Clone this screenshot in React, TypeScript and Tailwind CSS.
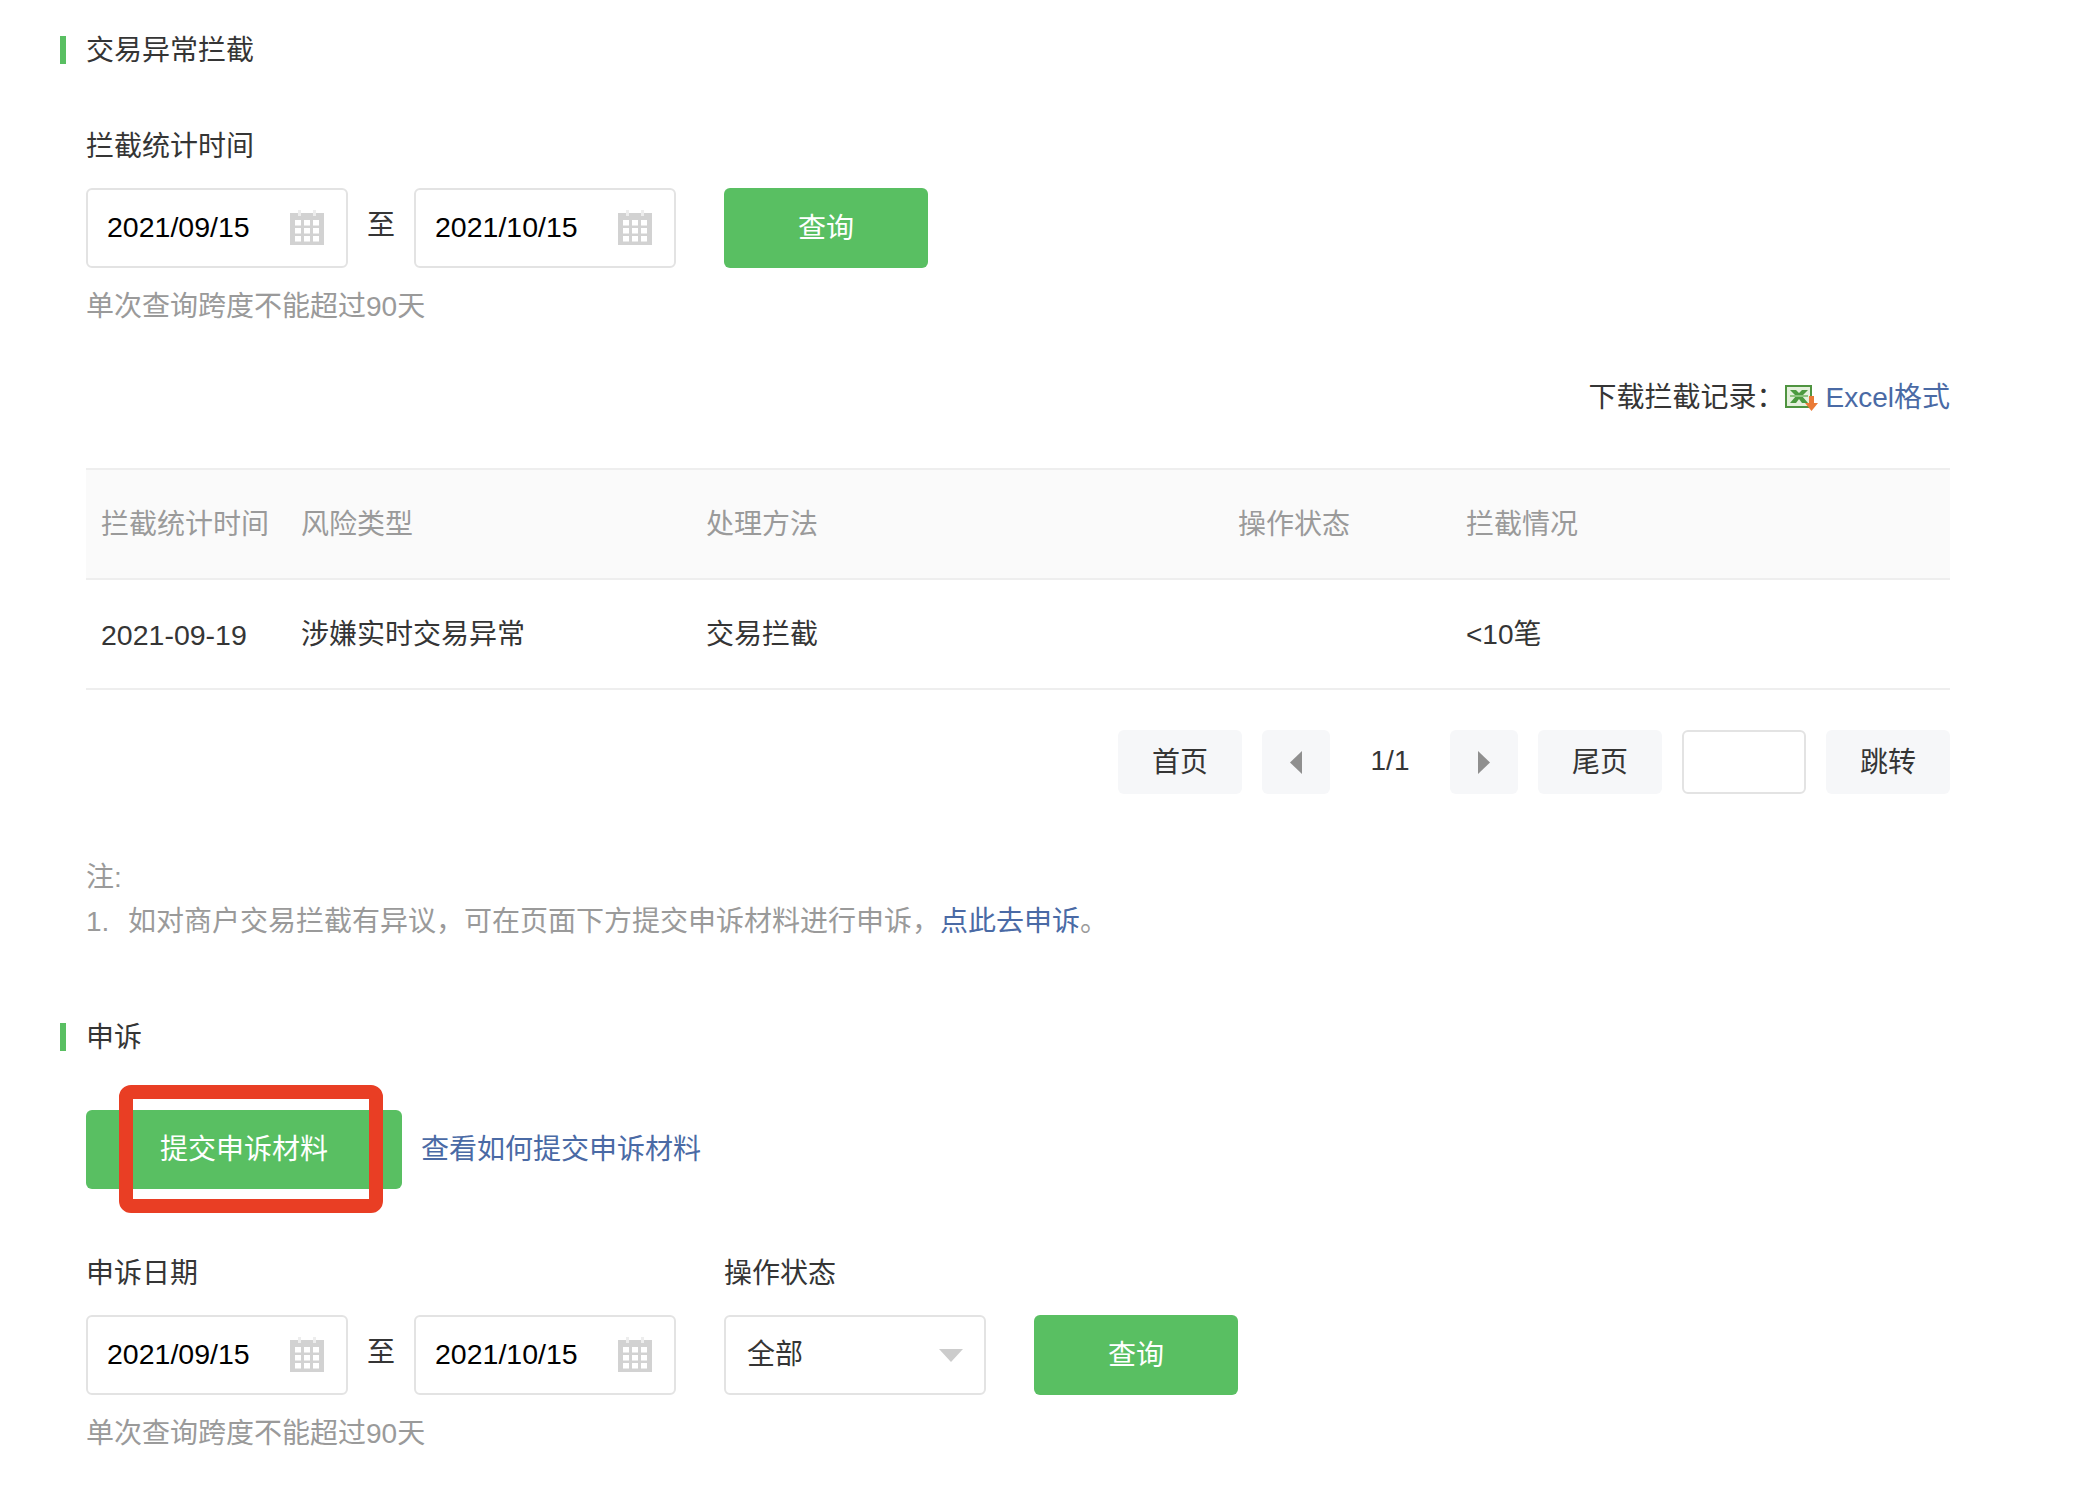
import type { ReactNode } from "react"

const GREEN = "bg-[#59bf62]"

function CalendarIcon() {
  const cells = [0, 1, 2].flatMap((r) => [0, 1, 2].map((c) => ({ r, c })))
  return (
    <svg width="34" height="35" viewBox="0 0 34 35" className="mb-[2px] shrink-0">
      <path d="M0 3h8V0h3v3h12V0h3v3h8v32H0z" fill="#d2d2d2" />
      <rect x="8" y="0" width="3" height="6" fill="#fff" opacity="0.6" />
      <rect x="23" y="0" width="3" height="6" fill="#fff" opacity="0.6" />
      {cells.map(({ r, c }) => (
        <rect key={`${r}-${c}`} x={5 + c * 9} y={10 + r * 8} width="6" height="5.5" fill="#fff" />
      ))}
    </svg>
  )
}

function ExcelIcon() {
  return (
    <svg width="33" height="26" viewBox="0 0 33 26" className="shrink-0">
      <rect x="1" y="1" width="25" height="21" fill="#e4f0dc" stroke="#4f9440" strokeWidth="2" />
      <path d="M5 5h6l3 3 3-3h6l-6 6 6 7h-6l-3-4-3 4H5l6-7z" fill="#4b9a3f" />
      <path d="M5 10h18v2H5z" fill="#8cc47f" />
      <path d="M24 11h5v7h4l-6.5 8-6.5-8h4z" fill="#ea7a36" />
    </svg>
  )
}

function DateInput({ value }: { value: string }) {
  return (
    <div className="flex h-[80px] w-[262px] items-center justify-between rounded-[6px] border-2 border-[#e3e3e3] pl-[19px] pr-[22px] text-[28.5px] text-black">
      <span className="pb-[1px]">{value}</span>
      <CalendarIcon />
    </div>
  )
}

function DateRange() {
  return (
    <>
      <DateInput value="2021/09/15" />
      <span className="w-[66px] pb-[4px] text-center">至</span>
      <DateInput value="2021/10/15" />
    </>
  )
}

function QueryButton() {
  return (
    <button className={`h-[80px] w-[204px] rounded-[6px] ${GREEN} pt-[1px] text-white`}>查询</button>
  )
}

function SectionTitle({ children }: { children: ReactNode }) {
  return (
    <div className="ml-[-26px] h-[28px] border-l-[6px] border-[#59bf62] pl-[20px] leading-[30px]">
      {children}
    </div>
  )
}

function PageButton({ children, narrow }: { children: ReactNode; narrow?: boolean }) {
  return (
    <button
      className={`flex h-[64px] items-center justify-center rounded-[6px] bg-[#f6f7f9] ${narrow ? "w-[68px]" : "w-[124px] pt-[2px]"}`}
    >
      {children}
    </button>
  )
}

function Triangle({ dir }: { dir: "left" | "right" }) {
  return (
    <svg width="12" height="23" viewBox="0 0 12 23">
      <path d={dir === "left" ? "M12 0v23L0 11.5z" : "M0 0v23l12-11.5z"} fill="#8f8f8f" />
    </svg>
  )
}

const columns = ["拦截统计时间", "风险类型", "处理方法", "操作状态", "拦截情况"]
const row = ["2021-09-19", "涉嫌实时交易异常", "交易拦截", "", "<10笔"]

export default function App() {
  return (
    <div className="min-h-[1496px] bg-white pl-[86px] pt-[36px] font-['Liberation_Sans','Noto_Sans_CJK_SC',sans-serif] text-[28px] text-[#353535]">
      <div className="w-[1864px]">
        <SectionTitle>交易异常拦截</SectionTitle>

        <div className="mt-[63px] leading-[40px]">拦截统计时间</div>
        <div className="mt-[21px] flex items-center">
          <DateRange />
          <div className="ml-[48px]">
            <QueryButton />
          </div>
        </div>
        <div className="mt-[19px] leading-[40px] text-[#9a9a9a]">单次查询跨度不能超过90天</div>

        <div className="mt-[51px] flex h-[40px] items-center justify-end">
          <span>下载拦截记录：</span>
          <span className="mr-[8px]">
            <ExcelIcon />
          </span>
          <a className="text-[#4a6aa5]">Excel格式</a>
        </div>

        <table className="mt-[50px] w-full table-fixed border-collapse">
          <colgroup>
            <col className="w-[200px]" />
            <col className="w-[405px]" />
            <col className="w-[532px]" />
            <col className="w-[228px]" />
            <col />
          </colgroup>
          <thead>
            <tr className="h-[110px] border-y-2 border-[#eeeeee] bg-[#fafafa] text-[#9a9a9a]">
              {columns.map((c) => (
                <th key={c} className="px-[15px] pt-[2px] text-left font-normal">
                  {c}
                </th>
              ))}
            </tr>
          </thead>
          <tbody>
            <tr className="h-[110px] border-b-2 border-[#eeeeee]">
              {row.map((c, i) => (
                <td key={i} className={`px-[15px] pt-[2px] ${i === 0 ? "text-[28.5px]" : ""}`}>
                  {c}
                </td>
              ))}
            </tr>
          </tbody>
        </table>

        <div className="mt-[40px] flex items-center justify-end">
          <PageButton>首页</PageButton>
          <div className="ml-[20px]">
            <PageButton narrow>
              <Triangle dir="left" />
            </PageButton>
          </div>
          <span className="w-[120px] pb-[3px] text-center">1/1</span>
          <PageButton narrow>
            <Triangle dir="right" />
          </PageButton>
          <div className="ml-[20px]">
            <PageButton>尾页</PageButton>
          </div>
          <div className="ml-[20px] h-[64px] w-[124px] rounded-[6px] border-2 border-[#e3e3e3]" />
          <div className="ml-[20px]">
            <PageButton>跳转</PageButton>
          </div>
        </div>

        <div className="mt-[62px] leading-[44px] text-[#9a9a9a]">
          <div>注:</div>
          <div className="flex">
            <span className="w-[42px]">1.</span>
            <span>
              如对商户交易拦截有异议，可在页面下方提交申诉材料进行申诉，
              <a className="text-[#4a6aa5]">点此去申诉</a>。
            </span>
          </div>
        </div>

        <div className="mt-[79px]">
          <SectionTitle>申诉</SectionTitle>
        </div>

        <div className="mt-[59px] flex items-center">
          <div className="relative">
            <button className={`h-[79px] w-[316px] rounded-[6px] ${GREEN} pt-[1px] text-white`}>提交申诉材料</button>
            <div className="absolute left-[33px] top-[-25px] h-[128px] w-[264px] rounded-[12px] border-[14px] border-[#e93e24]" />
          </div>
          <a className="ml-[19px] text-[#4a6aa5]">查看如何提交申诉材料</a>
        </div>

        <div className="mt-[65px] flex leading-[40px]">
          <span className="w-[638px]">申诉日期</span>
          <span>操作状态</span>
        </div>
        <div className="mt-[21px] flex items-center">
          <DateRange />
          <div className="ml-[48px] flex h-[80px] w-[262px] items-center justify-between rounded-[6px] border-2 border-[#e3e3e3] pl-[21px] pr-[21px]">
            <span>全部</span>
            <svg width="24" height="13" viewBox="0 0 24 13">
              <path d="M0 0h24L12 13z" fill="#cccccc" />
            </svg>
          </div>
          <div className="ml-[48px]">
            <QueryButton />
          </div>
        </div>
        <div className="mt-[19px] leading-[40px] text-[#9a9a9a]">单次查询跨度不能超过90天</div>
      </div>
    </div>
  )
}
